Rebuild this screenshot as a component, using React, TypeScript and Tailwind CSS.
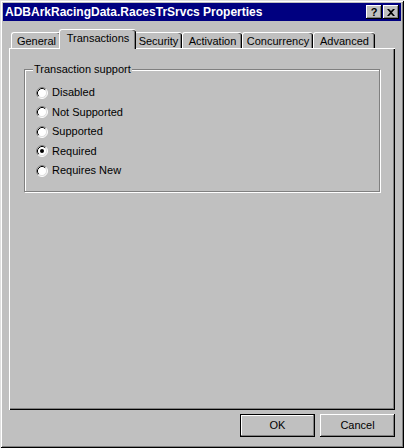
const tabs = [
  { label: "General", w: "w-[50px]" },
  { label: "Transactions", w: "w-[77px]", active: true },
  { label: "Security", w: "w-[48px]" },
  { label: "Activation", w: "w-[60px]" },
  { label: "Concurrency", w: "w-[71px]" },
  { label: "Advanced", w: "w-[62px]" },
];

const options = ["Disabled", "Not Supported", "Supported", "Required", "Requires New"];

function Radio({ checked }: { checked?: boolean }) {
  return (
    <svg width="12" height="12" viewBox="0 0 12 12" className="shrink-0">
      <circle cx="6" cy="6" r="5" fill="#fff" />
      <path d="M2.11 9.89 A5.5 5.5 0 0 1 9.89 2.11" fill="none" stroke="#808080" strokeWidth="1" />
      <path d="M9.89 2.11 A5.5 5.5 0 0 1 2.11 9.89" fill="none" stroke="#fff" strokeWidth="1" />
      <path d="M2.82 9.18 A4.5 4.5 0 0 1 9.18 2.82" fill="none" stroke="#000" strokeWidth="1" />
      <path d="M9.18 2.82 A4.5 4.5 0 0 1 2.82 9.18" fill="none" stroke="#dfdfdf" strokeWidth="1" />
      {checked && <circle cx="6" cy="6" r="2" fill="#000" />}
    </svg>
  );
}

export default function App() {
  return (
    <div
      className="w-[404px] h-[448px] bg-[#c0c0c0] p-[3px] flex flex-col text-[11px] text-black shadow-[inset_1px_1px_#dfdfdf,inset_-1px_-1px_#000,inset_2px_2px_#fff,inset_-2px_-2px_#808080]"
      style={{ fontFamily: '"Liberation Sans", Arial, sans-serif' }}
    >
      {/* title bar */}
      <div className="h-[18px] bg-[#000080] flex items-center justify-between pl-[2px] pr-[2px]">
        <span className="text-white font-bold text-[12px] leading-none">ADBArkRacingData.RacesTrSrvcs Properties</span>
        <div className="flex">
          <div className="w-[16px] h-[14px] bg-[#c0c0c0] flex items-center justify-center font-bold text-[11px] leading-none shadow-[inset_-1px_-1px_#000,inset_1px_1px_#fff,inset_-2px_-2px_#808080]">
            ?
          </div>
          <div className="w-[16px] h-[14px] ml-[1px] bg-[#c0c0c0] flex items-center justify-center shadow-[inset_-1px_-1px_#000,inset_1px_1px_#fff,inset_-2px_-2px_#808080]">
            <svg width="8" height="7" viewBox="0 0 8 7">
              <path d="M0 0h2l2 2 2-2h2L5 3.5 8 7H6L4 5 2 7H0l3-3.5z" fill="#000" />
            </svg>
          </div>
        </div>
      </div>

      <div className="flex-1 flex flex-col px-[6px] pt-[8px] pb-[8px]">
        {/* tabs */}
        <div className="h-[19px] flex items-end pl-[2px]">
          {tabs.map((t) =>
            t.active ? (
              <div
                key={t.label}
                className={`relative z-10 ${t.w} -mx-[2px] h-[20px] -mb-[1px] bg-[#c0c0c0] border-t border-l border-white rounded-tl-[3px] rounded-tr-[3px] shadow-[inset_-1px_0_#000,inset_-2px_0_#808080] flex justify-center pt-[2px] leading-[13px]`}
              >
                {t.label}
              </div>
            ) : (
              <div
                key={t.label}
                className={`${t.w} h-[16px] bg-[#c0c0c0] border-t border-l border-white rounded-tl-[3px] rounded-tr-[3px] shadow-[inset_-1px_0_#000,inset_-2px_0_#808080] flex justify-center pt-[2px] leading-[13px]`}
              >
                {t.label}
              </div>
            )
          )}
        </div>

        {/* panel */}
        <div className="flex-1 border-t border-l border-white shadow-[inset_-1px_-1px_#000,inset_-2px_-2px_#808080] pl-[14px] pr-[15px] pt-[20px]">
          <div className="relative h-[123px] border border-[#808080] shadow-[inset_1px_1px_#fff,1px_1px_#fff] pt-[13px] pl-[11px]">
            <span className="absolute -top-[7px] left-[8px] px-[1px] bg-[#c0c0c0] leading-[13px]">Transaction support</span>
            {options.map((o) => (
              <div key={o} className="h-[19.5px] flex items-center gap-[4px]">
                <Radio checked={o === "Required"} />
                <span className="leading-[13px]">{o}</span>
              </div>
            ))}
          </div>
        </div>

        {/* buttons */}
        <div className="mt-[4px] h-[23px] flex justify-end gap-[5px]">
          <div className="w-[75px] h-[23px] bg-[#c0c0c0] flex items-center justify-center shadow-[inset_0_0_0_1px_#000,inset_-2px_-2px_#808080,inset_2px_2px_#fff]">
            OK
          </div>
          <div className="w-[75px] h-[23px] bg-[#c0c0c0] flex items-center justify-center shadow-[inset_-1px_-1px_#000,inset_1px_1px_#fff,inset_-2px_-2px_#808080]">
            Cancel
          </div>
        </div>
      </div>
    </div>
  );
}
